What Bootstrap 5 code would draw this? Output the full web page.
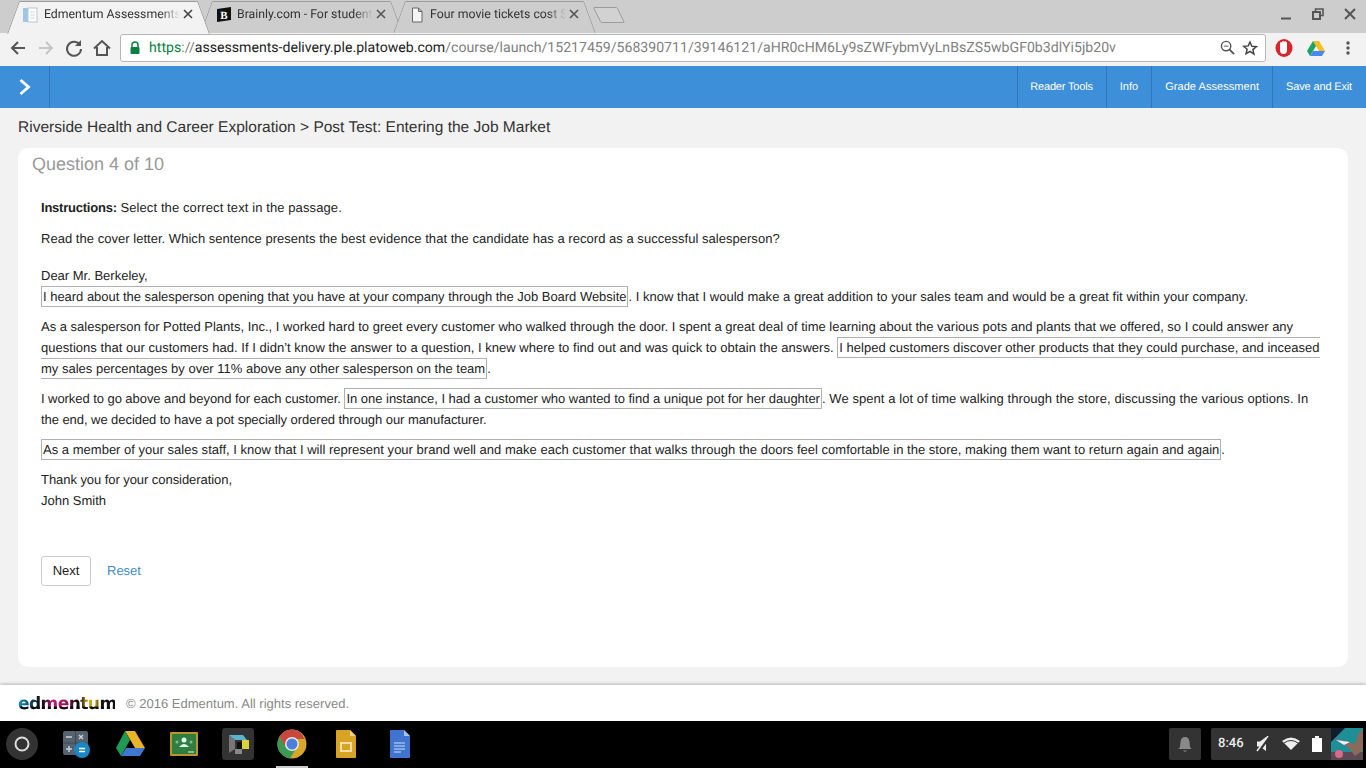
<!DOCTYPE html>
<html lang="en">
<head>
  <meta charset="UTF-8" />
  <title>Edmentum Assessment</title>
  <link href="https://cdn.jsdelivr.net/npm/bootstrap@5.3.3/dist/css/bootstrap.min.css" rel="stylesheet">
  <style>
    html, body { height: 768px; overflow: hidden; }
    body { background: #f2f2f2; font-family: "Liberation Sans", Arial, sans-serif; font-size: 13px; color: #222; text-rendering: geometricPrecision; }

    /* browser chrome */
    .tab-strip { height: 33px; background: #cdcdcd; padding-left: 13px; }
    .br-tab { position: relative; width: 191px; height: 32px; margin-top: 1px; margin-right: 2px; font: 12.3px Roboto, sans-serif; color: #333; z-index: 0; }
    .br-tab::before, .br-tab::after { content: ""; position: absolute; top: 0; bottom: 0; width: 30px; background: #cdcdcd; border: 1px solid #9c9c9c; border-bottom: 0; z-index: -1; }
    .br-tab::before { left: 0; border-right: 0; transform: skewX(-20deg); border-radius: 2px 0 0 0; }
    .br-tab::after { right: 0; border-left: 0; transform: skewX(20deg); border-radius: 0 2px 0 0; }
    .tab-body { position: absolute; left: 12px; right: 12px; top: 0; bottom: 0; border-top: 1px solid #9c9c9c; background: #cdcdcd; }
    .tab-active .tab-body, .tab-active::before, .tab-active::after { background: #f2f2f2; }
    .tab-active { z-index: 1; height: 33px; }
    .tab-title { position: absolute; left: 19px; top: 6px; width: 136px; white-space: nowrap; overflow: hidden; -webkit-mask-image: linear-gradient(90deg, #000 86%, transparent); mask-image: linear-gradient(90deg, #000 86%, transparent); }
    .tab-ico { position: absolute; left: -2px; top: 4px; }
    .tab-x { position: absolute; right: -1px; top: 7px; }
    .new-tab { width: 32px; height: 16px; margin-top: 7px; margin-left: 1px; }
    .win-btns { gap: 20px; padding-right: 10px; padding-bottom: 5px; }

    .tool-bar { height: 33px; background: #f2f2f2; padding-left: 8px; padding-bottom: 4px; }
    .nav-ico { width: 20px; height: 20px; margin-right: 8px; }
    .omni { margin-left: 8px; width: 1146px; height: 28px; background: #fff; border: 1px solid #b5b5b5; border-radius: 3px; font: 14.11px Roboto, sans-serif; padding-left: 8px; color: #808080; white-space: nowrap; }
    .omni .grn { color: #0b8043; }
    .omni .drk { color: #222; }
    .omni-zoom { margin-left: auto; margin-right: 7px; }
    .omni-star { margin-right: 7px; }
    .ext-opera { margin-left: 9px; }
    .ext-drive { margin-left: 14px; }
    .ext-dots { margin-left: 21px; }

    /* blue app bar */
    .app-bar { height: 42px; background: #3d8fd9; color: #fff; font-size: 11px; }
    .app-toggle { width: 50px; border-right: 1px solid #2f77bd; }
    .app-link { padding: 1px 13px 0; border-left: 1px solid #2f77bd; white-space: nowrap; }
    .app-link.lnk-reader { padding: 1px 13px 0 12px; letter-spacing: -.17px; }
    .app-link.lnk-grade { letter-spacing: .06px; }
    .app-link.lnk-save { padding: 1px 14px 0 13px; letter-spacing: -.15px; }

    /* content */
    .crumb { font-size: 15.53px; line-height: 18px; color: #333; padding: 11px 0 0 18px; height: 40px; }
    .q-panel { height: 519px; margin: 0 18px; background: #fff; border-radius: 10px; padding: 6px 14px 0; }
    .q-num { font-size: 18px; line-height: 20px; color: #999; }
    .q-inner { padding: 23px 9px 0; line-height: 21px; color: #222; }
    .q-inner p { margin: 0; }
    .q-inner p.gap-para { margin-bottom: 9px; }
    .q-inner p.gap-instr { margin-bottom: 10px; letter-spacing: .1px; }
    .q-inner p.gap-instr strong { letter-spacing: -.23px; }
    .q-inner p.gap-ask { margin-bottom: 16px; letter-spacing: .03px; }
    .sel { border: 1px solid #b0b0b0; padding: 2px 1px; }
    /* small tracking nudges so line ends land where the reference has them */
    .trk-n6 { letter-spacing: -.06px; }
    .trk-n2 { letter-spacing: -.025px; }
    .trk-p1 { letter-spacing: .015px; }
    .trk-p2 { letter-spacing: .025px; }
    .trk-p7 { letter-spacing: .07px; }
    .q-actions { margin-top: 45px; }
    .btn-next { width: 50px; height: 30px; padding: 0; font-size: 13px; background: #fff; border: 1px solid #ccc; border-radius: 3px; color: #222; }
    .lnk-reset { color: #428bca; text-decoration: none; margin-left: 16px; line-height: 19px; margin-bottom: 2px; }

    .foot-bar { height: 36px; margin-top: 18px; background: #fff; box-shadow: 0 -1px 3px rgba(0,0,0,.25); padding: 2px 0 0 18px; color: #888; font-size: 13.02px; }
    .edm-logo { font: 700 17px/1 "DejaVu Sans", sans-serif; letter-spacing: -.55px; margin-right: 11px; width: 97px; white-space: nowrap;
      background: linear-gradient(180deg, transparent 58%, #0c0c0c 66%), linear-gradient(90deg, #1293c4 0, #111 22%, #111 25%, #c2187a 36%, #a01050 50%, #111 60%, #111 64%, #d8a41c 72%, #c9981c 80%, #111 86%);
      -webkit-background-clip: text; background-clip: text; color: transparent; }

    /* os shelf */
    .shelf { height: 47px; background: #000; position: relative; padding-bottom: 2px; }
    .launch-btn { width: 32px; height: 32px; border-radius: 50%; background: #333; margin-left: 6px; margin-right: 22px; }
    .shelf-apps { gap: 22px; }
    .shelf-ind { position: absolute; left: 276px; bottom: 0; width: 32px; height: 2px; background: #ccc; }
    .tray-box { height: 32px; background: #333; border-radius: 2px; }
    .tray-bell { width: 32px; margin-right: 10px; margin-left: auto; }
    .tray-main { margin-right: 3px; }
    .tray-time { font: 500 13px Roboto, sans-serif; color: #eee; width: 26px; margin: 0 12px 0 7px; white-space: nowrap; }
    .tray-ico { margin-right: 12px; }
    .tray-bat { margin-right: 9px; }
    .wall { width: 32px; height: 32px; display: block; }
  </style>
</head>
<body>
  <div class="tab-strip d-flex">
    <div class="br-tab tab-active">
      <div class="tab-body">
        <svg class="tab-ico" width="16" height="18" viewBox="0 0 16 18"><rect x="0" y="2" width="5" height="14" fill="#9ec5e8"/><rect x="5" y="2" width="9" height="14" fill="#fff" stroke="#b5c7d8"/><path d="M7 6h5M7 9h5M7 12h5" stroke="#c9d6e2"/></svg>
        <div class="tab-title">Edmentum Assessments</div>
        <svg class="tab-x" width="10" height="10" viewBox="0 0 10 10"><path d="M1 1l8 8M9 1l-8 8" stroke="#444" stroke-width="1.6"/></svg>
      </div>
    </div>
    <div class="br-tab">
      <div class="tab-body">
        <svg class="tab-ico" width="16" height="18" viewBox="0 0 16 18"><path d="M1 3l14-2v13L1 16z" fill="#111"/><text x="8" y="13" text-anchor="middle" font-family="Liberation Serif" font-weight="700" font-size="11" fill="#fff">B</text></svg>
        <div class="tab-title">Brainly.com - For students</div>
        <svg class="tab-x" width="10" height="10" viewBox="0 0 10 10"><path d="M1 1l8 8M9 1l-8 8" stroke="#555" stroke-width="1.6"/></svg>
      </div>
    </div>
    <div class="br-tab">
      <div class="tab-body">
        <svg class="tab-ico" width="16" height="18" viewBox="0 0 16 18"><path d="M3.500 2h6l3.500 3.500V16h-9.500zM9.500 2v3.500H13" fill="#f4f4f4" stroke="#666"/></svg>
        <div class="tab-title">Four movie tickets cost $</div>
        <svg class="tab-x" width="10" height="10" viewBox="0 0 10 10"><path d="M1 1l8 8M9 1l-8 8" stroke="#555" stroke-width="1.6"/></svg>
      </div>
    </div>
    <svg class="new-tab" viewBox="0 0 32 16"><path d="M1 .5h22q1 0 1.500 1L31 15q.3.500-.5.500H9q-1 0-1.500-1L.8 1.200Q.6.500 1 .5z" fill="#d2d2d2" stroke="#9c9c9c"/></svg>
    <div class="win-btns d-flex align-items-center ms-auto">
      <svg width="12" height="12" viewBox="0 0 12 12"><path d="M1 10.500h10" stroke="#555" stroke-width="2"/></svg>
      <svg width="12" height="12" viewBox="0 0 12 12"><path d="M3.500 3V1h7.500v6.500H9" fill="none" stroke="#555" stroke-width="1.600"/><rect x="1" y="4" width="7" height="7" fill="none" stroke="#555" stroke-width="2"/></svg>
      <svg width="12" height="12" viewBox="0 0 12 12"><path d="M1 1l10 10M11 1L1 11" stroke="#555" stroke-width="2"/></svg>
    </div>
  </div>

  <div class="tool-bar d-flex align-items-center">
    <svg class="nav-ico" viewBox="0 0 20 20"><path d="M17 10H4M10 4l-6 6 6 6" fill="none" stroke="#555" stroke-width="2"/></svg>
    <svg class="nav-ico" viewBox="0 0 20 20"><path d="M3 10h13M10 4l6 6-6 6" fill="none" stroke="#c6c6c6" stroke-width="2"/></svg>
    <svg class="nav-ico" viewBox="0 0 20 20"><path d="M15.500 6.500A7 7 0 1 0 17 11" fill="none" stroke="#555" stroke-width="2"/><path d="M17 2v6h-6z" fill="#555"/></svg>
    <svg class="nav-ico m-0" viewBox="0 0 20 20"><path d="M2 10.500L10 3l8 7.500M5 9v8h10V9" fill="none" stroke="#555" stroke-width="2"/></svg>
    <div class="omni d-flex align-items-center">
      <svg class="me-2" width="12" height="14" viewBox="0 0 12 14"><path d="M3 6V4a3 3 0 0 1 6 0v2" fill="none" stroke="#0b8043" stroke-width="1.500"/><rect x="1.500" y="6" width="9" height="7" rx="1" fill="#0b8043"/></svg>
      <span><span class="grn">https</span>://<span class="drk">assessments-delivery.ple.platoweb.com</span>/course/launch/15217459/568390711/39146121/aHR0cHM6Ly9sZWFybmVyLnBsZS5wbGF0b3dlYi5jb20v</span>
      <svg class="omni-zoom" width="15" height="15" viewBox="0 0 16 16"><circle cx="6.500" cy="6.500" r="5" fill="none" stroke="#555" stroke-width="1.500"/><path d="M10 10l5 5" stroke="#555" stroke-width="2"/><path d="M4 6.500h5" stroke="#555"/></svg>
      <svg class="omni-star" width="16" height="16" viewBox="0 0 24 24"><path d="M12 3l2.700 6.300 6.800.6-5.200 4.500 1.600 6.700L12 17l-5.900 3.600 1.600-6.700-5.200-4.500 6.800-.6z" fill="none" stroke="#444" stroke-width="2.200"/></svg>
    </div>
    <svg class="ext-opera" width="18" height="20" viewBox="0 0 18 20"><ellipse cx="9" cy="10" rx="8.500" ry="9" fill="#d9252b"/><path d="M5 6q0-2 1-2t1 1q0-2 1-2t1 1q1-1 2-.5t1 1.500v7q0 4-3.500 4T5 12z" fill="#fff"/></svg>
    <svg class="ext-drive" width="18" height="18" viewBox="0 0 18 18"><path d="M6 2h6l6 10h-6z" fill="#f5bd20"/><path d="M6 2L0 12l3 5 6-10z" fill="#1ea362"/><path d="M3 17h12l3-5H6z" fill="#4688f1"/></svg>
    <svg class="ext-dots" width="4" height="14" viewBox="0 0 4 14"><circle cx="2" cy="2" r="1.700" fill="#555"/><circle cx="2" cy="7" r="1.700" fill="#555"/><circle cx="2" cy="12" r="1.700" fill="#555"/></svg>
  </div>

  <div class="app-bar d-flex">
    <div class="app-toggle d-flex align-items-center justify-content-center">
      <svg width="14" height="18" viewBox="0 0 14 18"><path d="M2.500 2l8 7-8 7" fill="none" stroke="#fff" stroke-width="2.800"/></svg>
    </div>
    <div class="d-flex ms-auto">
      <div class="app-link lnk-reader d-flex align-items-center">Reader Tools</div>
      <div class="app-link d-flex align-items-center">Info</div>
      <div class="app-link lnk-grade d-flex align-items-center">Grade Assessment</div>
      <div class="app-link lnk-save d-flex align-items-center">Save and Exit</div>
    </div>
  </div>

  <div class="crumb">Riverside Health and Career Exploration &gt; Post Test: Entering the Job Market</div>

  <div class="q-panel">
    <div class="q-num">Question 4 of 10</div>
    <div class="q-inner">
      <p class="gap-instr"><strong>Instructions:</strong> Select the correct text in the passage.</p>
      <p class="gap-ask">Read the cover letter. Which sentence presents the best evidence that the candidate has a record as a successful salesperson?</p>
      <p>Dear Mr. Berkeley,</p>
      <p class="gap-para"><span class="sel trk-n2">I heard about the salesperson opening that you have at your company through the Job Board Website</span><span class="trk-p2">. I know that I would make a great addition to your sales team and would be a great fit within your company.</span></p>
      <p class="gap-para">As a salesperson for Potted Plants, Inc., I worked hard to greet every customer who walked through the door. I spent a great deal of time learning about the various pots and plants that we offered, so I could answer any <span class="trk-p2">questions that our customers had. If I didn’t know the answer to a question, I knew where to find out and was quick to obtain the answers.</span> <span class="sel"><span class="trk-p2">I helped customers discover other products that they could purchase, and inceased</span> my sales percentages by over 11% above any other salesperson on the team</span>.</p>
      <p class="gap-para"><span class="trk-n6">I worked to go above and beyond for each customer.</span> <span class="sel trk-n2">In one instance, I had a customer who wanted to find a unique pot for her daughter</span><span class="trk-p7">. We spent a lot of time walking through the store, discussing the various options. In</span> <span class="trk-n6">the end, we decided to have a pot specially ordered through our manufacturer.</span></p>
      <p class="gap-para"><span class="sel trk-p1">As a member of your sales staff, I know that I will represent your brand well and make each customer that walks through the doors feel comfortable in the store, making them want to return again and again</span>.</p>
      <p class="trk-n6">Thank you for your consideration,</p>
      <p>John Smith</p>
      <div class="q-actions d-flex align-items-center">
        <button type="button" class="btn btn-next">Next</button>
        <a href="#" class="lnk-reset">Reset</a>
      </div>
    </div>
  </div>

  <div class="foot-bar d-flex align-items-center">
    <span class="edm-logo">edmentum</span>
    <span>© 2016 Edmentum. All rights reserved.</span>
  </div>

  <div class="shelf d-flex align-items-center">
    <div class="launch-btn d-flex align-items-center justify-content-center">
      <svg width="16" height="16" viewBox="0 0 16 16"><circle cx="8" cy="8" r="6.500" fill="none" stroke="#ddd" stroke-width="2"/></svg>
    </div>
    <div class="shelf-apps d-flex align-items-center">
      <svg width="32" height="32" viewBox="0 0 32 32"><rect x="3" y="3" width="25" height="24" rx="2" fill="#56636e"/><path d="M3 15h25M15.500 3v24" stroke="#3b4650"/><path d="M6 9h6M19 7l4 4M23 7l-4 4M6 21h6M9 18v6" stroke="#c8d0d8" stroke-width="1.500"/><circle cx="22" cy="22" r="8" fill="#1b87c5"/><path d="M19 20.500h6M19 23.500h6" stroke="#fff" stroke-width="1.300"/></svg>
      <svg width="32" height="32" viewBox="0 0 32 32"><path d="M11 3h10l10 17H21z" fill="#e9b32a"/><path d="M11 3L2 20l5 8 9-16z" fill="#1f9a55"/><path d="M7 28h19l5-8H12z" fill="#3f78d0"/></svg>
      <svg width="32" height="32" viewBox="0 0 32 32"><rect x="2" y="4" width="28" height="24" rx="1" fill="#b8962a"/><rect x="4" y="6" width="24" height="20" fill="#2f7d3f"/><circle cx="16" cy="12" r="2.500" fill="#dfe"/><path d="M11 19q5-6 10 0z" fill="#dfe"/><circle cx="9" cy="14" r="1.500" fill="#8ab89a"/><circle cx="23" cy="14" r="1.500" fill="#8ab89a"/><path d="M20 24h6" stroke="#eee"/></svg>
      <svg width="32" height="32" viewBox="0 0 32 32"><rect width="32" height="32" rx="3" fill="#333"/><path d="M7 7l6 5v9l-6 4z" fill="#777"/><path d="M7 7h14l4 5H13z" fill="#5cb3cc"/><path d="M20 12h7v9h-7z" fill="#d8d23c"/><path d="M13 21h7v5h-7z" fill="#888"/><path d="M15 14h5v7h-5z" fill="#111"/></svg>
      <svg width="32" height="32" viewBox="0 0 32 32"><circle cx="16" cy="16" r="14.500" fill="#d9a62a"/><path d="M16 1.500a14.500 14.500 0 0 0-12.500 7L9 19l7-8h12.500A14.500 14.500 0 0 0 16 1.500z" fill="#c9483d"/><path d="M3.500 8.500A14.500 14.500 0 0 0 14 30.500l6-10-11-2z" fill="#3a9a55"/><circle cx="16" cy="16" r="7" fill="#e9e9e9"/><circle cx="16" cy="16" r="5.500" fill="#4a80dc"/></svg>
      <svg width="32" height="32" viewBox="0 0 32 32"><path d="M7 2h13l6 6v21a1 1 0 0 1-1 1H7a1 1 0 0 1-1-1V3a1 1 0 0 1 1-1z" fill="#d9a326"/><path d="M20 2l6 6h-6z" fill="#efd07e"/><rect x="11" y="15" width="10" height="8" fill="none" stroke="#f3dfa5" stroke-width="2"/></svg>
      <svg width="32" height="32" viewBox="0 0 32 32"><path d="M7 2h13l6 6v21a1 1 0 0 1-1 1H7a1 1 0 0 1-1-1V3a1 1 0 0 1 1-1z" fill="#3f74cf"/><path d="M20 2l6 6h-6z" fill="#a9c2ec"/><path d="M10 15h11M10 18h11M10 21h11M10 24h7" stroke="#cfdcf4"/></svg>
    </div>
    <div class="shelf-ind"></div>
    <div class="tray-box tray-bell d-flex align-items-center justify-content-center">
      <svg width="14" height="16" viewBox="0 0 14 16"><path d="M7 1q4 0 4.500 5l.5 5 1.500 2H.5L2 11l.5-5Q3 1 7 1z" fill="#8a8a8a"/><path d="M5 14.500h4q-2 2.500-4 0z" fill="#8a8a8a"/></svg>
    </div>
    <div class="tray-box tray-main d-flex align-items-center">
      <span class="tray-time">8:46</span>
      <svg class="tray-ico" width="14" height="16" viewBox="0 0 14 16"><path d="M1 5.500h3L10 1v14l-6-4.500H1z" fill="#eee"/><path d="M2 16L13 1" stroke="#333" stroke-width="3"/><path d="M1 15L12 0" stroke="#eee" stroke-width="1.500"/></svg>
      <svg class="tray-ico" width="18" height="14" viewBox="0 0 18 14"><path d="M9 13L0 4q9-7 18 0z" fill="#eee"/><path d="M2 6q7-5 14 0" fill="none" stroke="#333"/></svg>
      <svg class="tray-bat" width="10" height="16" viewBox="0 0 10 16"><path d="M3 0h4v2h3v14H0V2h3z" fill="#fff"/></svg>
      <svg class="wall" viewBox="0 0 32 32"><rect width="32" height="32" fill="#1f8f97"/><path d="M0 0h14L0 14z" fill="#111d2a"/><path d="M0 24h32v8H0z" fill="#5b4a55"/><circle cx="8" cy="26" r="4" fill="#d86a8a"/><path d="M3 10l21 6 4-12 4-2v20l-8 6-6-8z" fill="#8a6a5a"/><path d="M5 12l14 2-6 3z" fill="#eef"/></svg>
    </div>
  </div>
</body>
</html>
